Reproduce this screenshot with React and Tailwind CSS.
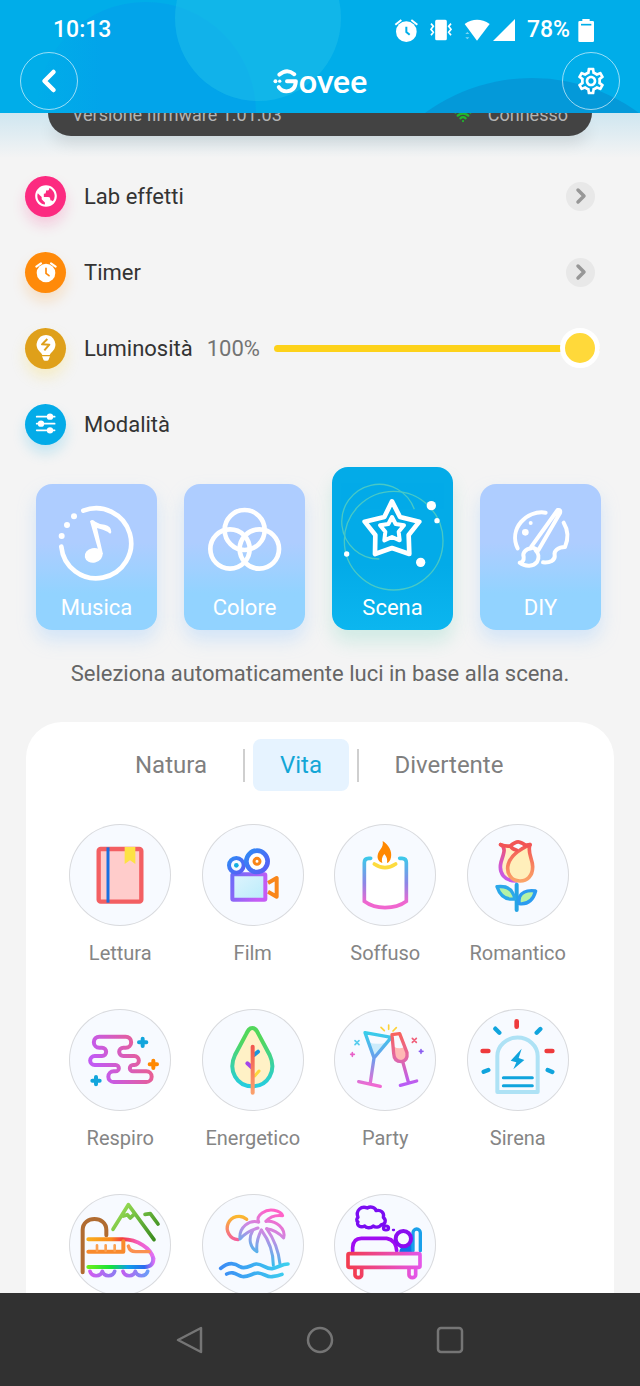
import { useState } from 'react'
import { ChevronLeft, ChevronRight, Wifi } from 'lucide-react'
import { MdOutlineSettings } from 'react-icons/md'
import { BiWorld } from 'react-icons/bi'

/* ---------- status bar ---------- */

const StatusIcons = () => (
  <div className="flex items-center">
    <svg viewBox="222 54 72 72" className="size-6 mr-3" fill="#fff">
      <circle cx="259" cy="95" r="31" />
      <path d="M226 74L244 60M292 74L274 60" stroke="#fff" strokeWidth="6" />
      <path d="M259 80V96L269 104" stroke="#00aee9" strokeWidth="6" fill="none" />
    </svg>
    <svg viewBox="332 60 66 66" className="size-[22px] mr-3" fill="none" stroke="#fff" strokeWidth="5">
      <rect x="350" y="65" width="30" height="56" rx="2" fill="#fff" />
      <path d="M335 74l7 8-7 9 7 9-7 9M395 74l-7 8 7 9-7 9 7 9" />
    </svg>
    <svg viewBox="430 58 78 66" className="w-[26px] h-[22px] mr-[3px]" fill="#fff">
      <path d="M432 73Q469 48 507 73L469 123Z" />
      <path d="M434 103l6-6 6 6zM434 113l6 6 6-6z" opacity=".5" />
    </svg>
    <svg viewBox="516 57 66 66" className="size-[22px] mr-3" fill="#fff">
      <path d="M582 57V123H516Z" />
    </svg>
    <span className="mr-2">78%</span>
    <svg viewBox="771 57 48 69" className="w-4 h-[23px]">
      <path d="M784 57h22v6h9q4 0 4 4v55q0 4-4 4h-39q-4 0-4-4V67q0-4 4-4h8z" fill="#fff" />
      <path d="M780 74h31" stroke="#00aee9" strokeWidth="5" />
    </svg>
  </div>
)

const Header = () => (
  <header className="relative z-10 shrink-0 overflow-hidden bg-[#00ade9] text-white">
    <svg
      viewBox="0 0 640 113"
      preserveAspectRatio="xMidYMax slice"
      className="absolute inset-0 size-full"
      aria-hidden="true"
    >
      <defs>
        <linearGradient id="headerBlob" x1="0" x2="1">
          <stop offset="0" stopColor="#00ade9" />
          <stop offset=".3" stopColor="#02a4ea" />
          <stop offset="1" stopColor="#02a4ea" />
        </linearGradient>
      </defs>
      <circle cx="146" cy="112" r="110" fill="url(#headerBlob)" />
      <circle cx="258" cy="18" r="83" fill="#1cbde9" fillOpacity=".6" />
      <circle cx="532" cy="259" r="181" fill="#0499d9" />
    </svg>

    <div className="relative flex h-[52px] items-center justify-between pt-2 pl-[53px] pr-[46px] text-[23px] font-medium">
      <span>10:13</span>
      <StatusIcons />
    </div>

    <div className="relative flex items-center justify-between px-5 pb-[3px]">
      <button
        aria-label="Indietro"
        className="flex size-[58px] items-center justify-center rounded-full border border-white/60"
      >
        <ChevronLeft className="size-9" strokeWidth={3} />
      </button>
      <div className="flex items-center">
        <svg viewBox="820 200 78 82" className="w-[26px] h-[27px]" fill="none" stroke="#fff" strokeWidth="12">
          <path d="M839 220Q862 200 884 219" strokeLinecap="round" />
          <path d="M862 240H889Q887 271 860 271Q845 270 837 258" strokeLinecap="round" strokeLinejoin="round" />
          <circle cx="827" cy="240" r="6" fill="#fff" stroke="none" />
          <circle cx="840" cy="240" r="5" fill="#fff" stroke="none" />
        </svg>
        <span className="text-[32px] leading-8 font-bold font-['Lato',sans-serif]">ovee</span>
      </div>
      <button
        aria-label="Impostazioni"
        className="flex size-[58px] items-center justify-center rounded-full border border-white/60"
      >
        <MdOutlineSettings className="size-8" />
      </button>
    </div>
  </header>
)

/* ---------- settings rows ---------- */

const TimerIcon = () => (
  <svg viewBox="104 300 66 66" className="size-[22px]" fill="#fff">
    <circle cx="137" cy="336" r="28" />
    <path d="M108 317L122 307M166 317L152 307" stroke="#fff" strokeWidth="6" strokeLinecap="round" />
    <path d="M137 322V337L146 344" stroke="#ff8a0a" strokeWidth="5" fill="none" strokeLinecap="round" />
  </svg>
)

const BulbIcon = () => (
  <svg viewBox="101 522 72 84" className="w-6 h-7" fill="#fff">
    <path d="M137 525a29 29 0 0 1 20 49q-7 6-9 11h-22q-2-5-9-11a29 29 0 0 1 20-49z" />
    <path d="M125 589h24l-5 12q-7 3-14 0z" />
    <path d="M141 537L125 553L147 554L132 571" stroke="#dfa01a" strokeWidth="6" fill="none" strokeLinejoin="round" />
  </svg>
)

const SlidersIcon = () => (
  <svg viewBox="104 762 66 66" className="size-[22px]" stroke="#fff" strokeWidth="5" fill="#fff" strokeLinecap="round">
    <path d="M109 773H163M109 794H163M109 814H163" />
    <circle cx="149" cy="773" r="7" />
    <circle cx="122" cy="794" r="7" />
    <circle cx="149" cy="814" r="7" />
  </svg>
)

const RowBadge = ({ className, children }) => (
  <span className={`flex size-[41px] shrink-0 items-center justify-center rounded-full text-white ${className}`}>
    {children}
  </span>
)

const LinkRow = ({ badge, label }) => (
  <a href="#" className="flex h-19 items-center gap-[18px]">
    {badge}
    <span className="flex-1 text-[22px]">{label}</span>
    <span className="mr-[5px] flex size-[29px] items-center justify-center rounded-full bg-[#e8e8e8]">
      <ChevronRight className="size-6 text-[#979797]" strokeWidth={3.5} />
    </span>
  </a>
)

/* ---------- mode cards ---------- */

const MusicArt = () => (
  <svg viewBox="50 87 363 330" className="w-full" fill="none" stroke="#fff" strokeWidth="14" strokeLinecap="round">
    <path d="M192 167A105 105 0 1 1 126 275" />
    <g fill="#fff" stroke="none">
      <circle cx="164" cy="184" r="9" />
      <circle cx="143" cy="210" r="9" />
      <circle cx="127" cy="243" r="9" />
      <ellipse cx="223" cy="301" rx="27" ry="22" transform="rotate(-12 223 301)" />
      <path d="M212 199Q219 191 228 200Q240 208 256 209Q276 213 276 231Q274 240 266 231Q252 224 233 219L251 298L241 300Z" />
    </g>
  </svg>
)

const ColorArt = () => (
  <svg viewBox="493 87 363 330" className="w-full" fill="none" stroke="#fff" strokeWidth="14">
    <circle cx="675" cy="225" r="60" />
    <circle cx="631" cy="282" r="59" />
    <circle cx="719" cy="282" r="59" />
  </svg>
)

const SceneArt = () => (
  <svg viewBox="38 36 363 381" className="w-full" fill="none" stroke="#fff" strokeLinejoin="round">
    <g stroke="#5ad0bd" strokeWidth="4" opacity=".8">
      <circle cx="223" cy="257" r="148" />
      <path d="M285 163A112 112 0 1 0 180 312" />
    </g>
    <path
      d="M218 139L242 186L300 200L268 240L270 297L218 279L167 297L168 240L136 200L195 186Z"
      strokeWidth="14"
    />
    <path
      d="M218 186L229 207L254 211L238 230L241 256L218 246L195 256L198 230L182 211L207 207Z"
      strokeWidth="12"
    />
    <g fill="#fff" stroke="none">
      <circle cx="336" cy="152" r="14" />
      <circle cx="353" cy="197" r="8" />
      <circle cx="82" cy="297" r="8" />
      <circle cx="304" cy="322" r="14" />
    </g>
  </svg>
)

const DiyArt = () => (
  <svg
    viewBox="481 87 363 330"
    className="w-full"
    fill="none"
    stroke="#fff"
    strokeWidth="12"
    strokeLinecap="round"
    strokeLinejoin="round"
  >
    <path d="M678 173C620 164 566 222 594 280" />
    <path d="M732 203C746 226 746 252 736 276C715 276 702 288 705 300C708 316 690 324 670 322" />
    <path d="M714 165Q724 163 721 174L656 286L635 275Z" />
    <path d="M635 280C616 282 608 295 612 306C613 317 607 322 600 323C618 337 642 334 652 321C660 308 656 294 648 286" />
    <g fill="#fff" stroke="none">
      <circle cx="617" cy="232" r="10" />
      <circle cx="633" cy="204" r="6" />
    </g>
  </svg>
)

const modes = [
  { id: 'musica', label: 'Musica', Art: MusicArt },
  { id: 'colore', label: 'Colore', Art: ColorArt },
  { id: 'scena', label: 'Scena', Art: SceneArt },
  { id: 'diy', label: 'DIY', Art: DiyArt },
]

/* ---------- scene icons ---------- */

const ReadingIcon = () => (
  <svg viewBox="44 40 306 306" className="size-full">
    <rect x="133" y="115" width="128" height="158" rx="6" fill="#ffcccb" stroke="#f35f62" strokeWidth="13" />
    <path d="M161 110V276" stroke="#1a6ee0" strokeWidth="9" />
    <path d="M211 109H243V160L227 149L211 160Z" fill="#fde244" />
  </svg>
)

const FilmIcon = () => (
  <svg viewBox="442 40 306 306" className="size-full" fill="none" strokeWidth="12" strokeLinejoin="round">
    <defs>
      <linearGradient id="filmBody" x1="0" y1="0" x2="1" y2=".4">
        <stop offset="0" stopColor="#6a6cf8" />
        <stop offset="1" stopColor="#c55cf5" />
      </linearGradient>
      <linearGradient id="filmReel" x1="0" y1="0" x2="1" y2="1">
        <stop offset="0" stopColor="#2f8af5" />
        <stop offset="1" stopColor="#5a5cf5" />
      </linearGradient>
      <linearGradient id="filmGlass" x1="0" y1="0" x2="1" y2="1">
        <stop offset="0" stopColor="#dff4fd" />
        <stop offset="1" stopColor="#b9ecfb" />
      </linearGradient>
    </defs>
    <path d="M640 217L666 202V258L640 243" stroke="#f9861a" />
    <rect x="533" y="191" width="99" height="76" rx="3" stroke="url(#filmBody)" fill="url(#filmGlass)" />
    <circle cx="545" cy="164" r="22" stroke="url(#filmReel)" />
    <circle cx="545" cy="164" r="7" fill="#14aee0" />
    <circle cx="607" cy="152" r="32" stroke="url(#filmReel)" strokeWidth="14" fill="#fff" />
    <circle cx="607" cy="152" r="9" stroke="#f9861a" strokeWidth="9" />
  </svg>
)

const CandleIcon = () => (
  <svg viewBox="44 40 306 306" className="size-full" fill="none" strokeWidth="11" strokeLinecap="round">
    <defs>
      <linearGradient id="candle" gradientUnits="userSpaceOnUse" x1="0" y1="143" x2="0" y2="292">
        <stop offset="0" stopColor="#3ec8ea" />
        <stop offset=".5" stopColor="#8d86e6" />
        <stop offset=".9" stopColor="#f066cf" />
      </linearGradient>
    </defs>
    <path
      d="M154 143H148Q135 143 135 156V272Q160 291 197 291Q236 291 261 272V156Q261 143 248 143H241"
      stroke="url(#candle)"
      fill="#fff"
    />
    <path d="M165 160Q197 182 229 160" stroke="#fddb3e" />
    <path
      d="M190 91C208 102 219 122 215 140C213 151 208 156 203 157C205 146 202 138 195 130C188 138 186 147 189 157C180 155 173 146 175 134C177 118 194 112 190 91Z"
      fill="#ff8800"
    />
  </svg>
)

const RoseIcon = () => (
  <svg viewBox="442 40 306 306" className="size-full" fill="none" strokeWidth="11" strokeLinecap="round" strokeLinejoin="round">
    <defs>
      <linearGradient id="roseLeft" gradientUnits="userSpaceOnUse" x1="0" y1="100" x2="0" y2="212">
        <stop offset="0" stopColor="#f25560" />
        <stop offset=".6" stopColor="#cf57d6" />
        <stop offset="1" stopColor="#c85ae8" />
      </linearGradient>
      <linearGradient id="roseRight" gradientUnits="userSpaceOnUse" x1="0" y1="100" x2="0" y2="212">
        <stop offset="0" stopColor="#f25555" />
        <stop offset="1" stopColor="#fba468" />
      </linearGradient>
    </defs>
    <path d="M543 102C562 112 550 132 544 155C536 188 555 211 590 211L600 130L575 108Z" fill="#fff0c4" />
    <path d="M543 102C562 112 550 132 544 155C536 188 555 211 590 211" stroke="url(#roseLeft)" />
    <path
      d="M600 211C572 210 559 184 566 160C574 132 600 116 631 102C622 126 639 144 639 168C639 196 622 212 600 211Z"
      stroke="url(#roseRight)"
      fill="#ffefbb"
    />
    <path
      d="M543 102Q558 108 572 106Q588 92 598 94Q612 98 616 104L631 102M572 106Q578 116 590 118"
      stroke="#f25555"
    />
    <path d="M591 222V298" stroke="#26a4e4" strokeWidth="12" />
    <path d="M532 228Q568 224 578 246Q586 258 585 265Q546 270 532 228Z" stroke="#2ba8ea" strokeWidth="10" fill="#b4f2a6" />
    <path d="M648 241Q612 236 600 258Q597 268 598 279Q636 284 648 241Z" stroke="#2b9bf0" strokeWidth="10" fill="#b4f2a6" />
  </svg>
)

const BreathIcon = () => (
  <svg viewBox="44 27 306 306" className="size-full" fill="none" strokeWidth="12" strokeLinecap="round">
    <defs>
      <linearGradient id="breath" x1="0" y1=".3" x2="1" y2="0">
        <stop offset="0" stopColor="#c25af2" />
        <stop offset="1" stopColor="#f2607a" />
      </linearGradient>
    </defs>
    <path
      d="M135 110H214A16 16 0 0 1 214 143H207A12 12 0 0 0 207 168H240A13 13 0 0 1 240 195H236A9 9 0 0 0 236 214H276A16 16 0 0 1 276 246H178A16 16 0 0 1 178 214H184A9 9 0 0 0 184 195H121A13 13 0 0 1 121 168H143A12 12 0 0 0 143 143H135A16 16 0 0 1 135 110Z"
      stroke="url(#breath)"
    />
    <path d="M265 116V138M254 127H276M125 231V253M114 242H136" stroke="#12a5dc" />
    <path d="M297 182V204M286 193H308" stroke="#ff8800" />
  </svg>
)

const LeafIcon = () => (
  <svg viewBox="442 27 306 306" className="size-full" fill="none" strokeWidth="12" strokeLinecap="round">
    <defs>
      <linearGradient id="leaf" x1="0" y1="0" x2="0" y2="1">
        <stop offset=".2" stopColor="#52d75c" />
        <stop offset="1" stopColor="#25cde0" />
      </linearGradient>
      <linearGradient id="leafStem" gradientUnits="userSpaceOnUse" x1="0" y1="140" x2="0" y2="278">
        <stop offset="0" stopColor="#f2584f" />
        <stop offset="1" stopColor="#fba06c" />
      </linearGradient>
    </defs>
    <path
      d="M593 84C602 84 606 91 612 103L645 165C667 212 640 259 593 259C546 259 519 212 541 165L574 103C580 91 584 84 593 84Z"
      stroke="url(#leaf)"
      fill="#fff1c6"
    />
    <path d="M598 165L610 155" stroke="#1b96dd" />
    <path d="M578 190L591 202" stroke="#a346ea" />
    <path d="M600 228L613 213" stroke="#fdd63c" strokeWidth="9" />
    <path d="M594 140V278" stroke="url(#leafStem)" />
  </svg>
)

const PartyIcon = () => (
  <svg viewBox="44 27 306 306" className="size-full" fill="none" strokeWidth="10" strokeLinecap="round" strokeLinejoin="round">
    <defs>
      <linearGradient id="martini" gradientUnits="userSpaceOnUse" x1="0" y1="98" x2="0" y2="255">
        <stop offset="0" stopColor="#38cdea" />
        <stop offset=".5" stopColor="#6d9cec" />
        <stop offset="1" stopColor="#f06ad2" />
      </linearGradient>
      <linearGradient id="flute" gradientUnits="userSpaceOnUse" x1="0" y1="100" x2="0" y2="255">
        <stop offset="0" stopColor="#f8635c" />
        <stop offset=".5" stopColor="#e067a8" />
        <stop offset="1" stopColor="#b85cf8" />
      </linearGradient>
    </defs>
    <path d="M148 126Q168 136 198 128L165 172Z" fill="#ccecfb" />
    <path d="M137 98L216 112L164 174ZM164 174L153 248M118 245L183 259" stroke="url(#martini)" />
    <path d="M224 140Q240 150 256 140L263 165Q262 183 244 184Q226 182 224 160Z" fill="#ffb9b4" />
    <path
      d="M218 104L241 101L263 158Q266 182 246 185Q224 185 223 160ZM251 188L267 246M243 256L292 243"
      stroke="url(#flute)"
    />
    <path d="M185 82L195 92M208 75V88M231 83L221 93" stroke="#fdd23a" strokeWidth="5" />
    <path d="M107 122L119 134M119 122L107 134" stroke="#57cdee" strokeWidth="5" />
    <path d="M99 158V169M94 163H105" stroke="#e860c8" strokeWidth="5" />
    <path d="M279 115L291 127M291 115L279 127" stroke="#f0607a" strokeWidth="5" />
    <path d="M305 149V160M300 154H311" stroke="#8a5cf0" strokeWidth="5" />
  </svg>
)

const SirenIcon = () => (
  <svg viewBox="442 27 306 306" className="size-full" fill="none" strokeLinecap="round">
    <path
      d="M533 276V168A60 55 0 0 1 654 168V276Z"
      stroke="#aee2f5"
      strokeWidth="12"
      strokeLinejoin="round"
    />
    <path d="M551 233H638M551 257H638" stroke="#10a4dd" strokeWidth="9" />
    <path d="M606 146L573 182L590 187L581 208L614 180L597 174Z" fill="#10a4dd" />
    <path d="M591 64V80M489 153H506M681 153H698" stroke="#ee3a3c" strokeWidth="14" />
    <path d="M527 86L539 98M662 87L651 98M492 215L506 210M684 210L698 216" stroke="#10a4dd" strokeWidth="13" />
  </svg>
)

const TrainIcon = () => (
  <svg viewBox="44 42 306 306" className="size-full" fill="none" strokeWidth="12" strokeLinecap="round" strokeLinejoin="round">
    <defs>
      <linearGradient id="hill" gradientUnits="userSpaceOnUse" x1="180" y1="74" x2="300" y2="180">
        <stop offset="0" stopColor="#a4e65a" />
        <stop offset=".5" stopColor="#6db93e" />
        <stop offset="1" stopColor="#3a8a1e" />
      </linearGradient>
      <linearGradient id="trainTop" gradientUnits="userSpaceOnUse" x1="100" y1="0" x2="300" y2="0">
        <stop offset="0" stopColor="#f9ad1c" />
        <stop offset=".35" stopColor="#fb8a1a" />
        <stop offset=".52" stopColor="#f23c3c" />
        <stop offset=".75" stopColor="#f55cc0" />
        <stop offset="1" stopColor="#e070f5" />
      </linearGradient>
      <linearGradient id="trainBottom" gradientUnits="userSpaceOnUse" x1="100" y1="0" x2="300" y2="0">
        <stop offset="0" stopColor="#6cf01c" />
        <stop offset=".35" stopColor="#14e03c" />
        <stop offset=".6" stopColor="#0ca0e8" />
        <stop offset=".85" stopColor="#2a6af0" />
        <stop offset="1" stopColor="#e070f5" />
      </linearGradient>
      <linearGradient id="wheels" x1="0" y1="0" x2="1" y2="0">
        <stop offset="0" stopColor="#cf5cf0" />
        <stop offset=".45" stopColor="#8c7cf2" />
        <stop offset=".55" stopColor="#c45cf0" />
        <stop offset="1" stopColor="#6a9cf8" />
      </linearGradient>
    </defs>
    <path d="M85 277V150C85 106 156 106 156 150V166" stroke="#b06b30" />
    <path d="M176 148L222 74L299 179M207 108L219 104L228 114L238 104M272 103L288 101L311 132" stroke="url(#hill)" strokeWidth="11" />
    <path d="M102 178H205C250 178 290 205 297 235" stroke="url(#trainTop)" />
    <path d="M102 261H272Q298 260 297 235" stroke="url(#trainBottom)" />
    <path d="M102 215H207V184" stroke="#f98a2c" />
    <path d="M128 196V212M154 196V212M181 196V212" stroke="#fba050" strokeWidth="8" />
    <path d="M222 198Q226 215 244 215H284" stroke="#fb9050" strokeWidth="10" />
    <path
      d="M107 274A19 17 0 0 0 144 274A19 17 0 0 0 181 274M206 274A19 17 0 0 0 243 274A19 17 0 0 0 280 274"
      stroke="url(#wheels)"
      strokeWidth="11"
    />
  </svg>
)

const BeachIcon = () => (
  <svg viewBox="442 42 306 306" className="size-full" fill="none" strokeWidth="9" strokeLinecap="round" strokeLinejoin="round">
    <defs>
      <linearGradient id="sun" x1="0" y1="0" x2="0" y2="1">
        <stop offset="0" stopColor="#fbb82e" />
        <stop offset="1" stopColor="#f5609a" />
      </linearGradient>
      <linearGradient id="palm" gradientUnits="userSpaceOnUse" x1="660" y1="100" x2="600" y2="240">
        <stop offset="0" stopColor="#ff62c8" />
        <stop offset=".45" stopColor="#c88ce4" />
        <stop offset="1" stopColor="#2cc0ee" />
      </linearGradient>
      <linearGradient id="wave" x1="0" y1="0" x2="1" y2="0">
        <stop offset="0" stopColor="#3c8cf5" />
        <stop offset="1" stopColor="#3cd0ee" />
      </linearGradient>
    </defs>
    <path d="M576 118A35 35 0 1 0 550 179" stroke="url(#sun)" strokeWidth="10" />
    <g stroke="url(#palm)">
      <path d="M612 126C602 106 634 86 658 91C674 94 682 100 684 107C662 104 646 110 634 124" />
      <path d="M634 124C664 120 694 146 687 174C672 158 656 148 636 146" />
      <path d="M612 126C584 118 552 142 556 177C572 158 588 150 610 144" />
      <path d="M594 152C580 176 586 204 607 215C604 192 610 170 620 150" />
      <path d="M620 150C642 180 656 216 656 256M636 146C660 180 672 214 676 252" />
    </g>
    <path
      d="M498 265C520 246 540 248 556 260C572 270 590 254 604 252C622 250 634 268 652 266C672 262 682 252 700 252M516 282C534 272 546 284 560 289C580 294 594 278 610 279C628 280 636 292 652 290Q670 288 682 283"
      stroke="url(#wave)"
      strokeWidth="11"
    />
  </svg>
)

const SleepIcon = () => (
  <svg viewBox="840 42 306 306" className="size-full" fill="none" strokeWidth="11" strokeLinecap="round" strokeLinejoin="round">
    <defs>
      <linearGradient id="bed" x1="0" y1="0" x2="1" y2="0">
        <stop offset="0" stopColor="#f23c50" />
        <stop offset="1" stopColor="#e456e8" />
      </linearGradient>
    </defs>
    <path
      d="M912 112C904 92 922 76 940 84C950 78 964 82 966 92C980 88 992 98 988 112C998 120 994 134 982 134C976 144 962 142 958 138C950 146 936 144 932 138C920 144 906 136 912 126C906 122 908 116 912 112Z"
      stroke="#7a0cf2"
      strokeWidth="10"
    />
    <ellipse cx="996" cy="144" rx="8" ry="6" stroke="#7a0cf2" strokeWidth="9" />
    <path d="M1017 150H1020" stroke="#7a0cf2" strokeWidth="7" />
    <path d="M1036 216C1036 198 1060 192 1074 182V216Z" fill="#0c74ea" />
    <path d="M1077 212V158A11 11 0 0 1 1099 158V212" stroke="#1aa0ea" strokeWidth="10" />
    <path d="M896 214V202Q898 175 922 175H998Q1026 180 1028 212" stroke="#a00cf2" />
    <circle cx="1048" cy="176" r="23" stroke="#8a0cf0" strokeWidth="12" fill="#f7faff" />
    <path d="M903 264V285A10 8 0 0 0 923 285V264M1065 264V285A10 8 0 0 0 1085 285V264" stroke="url(#bed)" />
    <rect x="882" y="221" width="216" height="41" rx="4" stroke="url(#bed)" />
  </svg>
)

const scenes = [
  { name: 'Lettura', Icon: ReadingIcon, label: true },
  { name: 'Film', Icon: FilmIcon, label: true },
  { name: 'Soffuso', Icon: CandleIcon, label: true },
  { name: 'Romantico', Icon: RoseIcon, label: true },
  { name: 'Respiro', Icon: BreathIcon, label: true },
  { name: 'Energetico', Icon: LeafIcon, label: true },
  { name: 'Party', Icon: PartyIcon, label: true },
  { name: 'Sirena', Icon: SirenIcon, label: true },
  { name: 'Treno', Icon: TrainIcon },
  { name: 'Spiaggia', Icon: BeachIcon },
  { name: 'Sonno', Icon: SleepIcon },
]

const tabStyles = (active) =>
  active ? 'bg-[#e6f3ff] text-[#13a6d6]' : 'text-[#7f7f7f]'

const App = () => {
  const [brightness, setBrightness] = useState(100)
  const [mode, setMode] = useState('scena')
  const [tab, setTab] = useState('Vita')

  return (
    <div className="flex h-screen flex-col overflow-hidden bg-[#f4f4f4] font-['Roboto',sans-serif] text-[#333]">
      <Header />

      <main className="flex-1 overflow-y-auto [scrollbar-width:none]">
        {/* device info, scrolled under the header */}
        <div className="h-[45px] bg-linear-to-b from-[#cfe6f0] to-[#f4f4f4] px-12">
          <div className="flex h-[23px] items-end justify-between rounded-b-[32px] bg-[#434343] px-6 pb-[11px] text-[18px] leading-5 text-[#b4b4b4] shadow-[0_10px_16px_-4px_rgba(0,0,0,0.12)]">
            <span>Versione firmware 1.01.03</span>
            <span className="flex items-center gap-4">
              <Wifi className="size-[18px] text-[#22b52e]" strokeWidth={3} />
              Connesso
            </span>
          </div>
        </div>

        <section className="pl-[25px] pr-10">
          <LinkRow
            label="Lab effetti"
            badge={
              <RowBadge className="bg-[#fc2a80] shadow-[0_8px_14px_rgba(252,42,128,0.2)]">
                <BiWorld className="size-[26px]" />
              </RowBadge>
            }
          />
          <LinkRow
            label="Timer"
            badge={
              <RowBadge className="bg-[#ff8a0a] shadow-[0_8px_14px_rgba(255,138,10,0.2)]">
                <TimerIcon />
              </RowBadge>
            }
          />
          <div className="flex h-19 items-center">
            <RowBadge className="bg-[#dfa01a] shadow-[0_8px_14px_rgba(253,215,60,0.25)]">
              <BulbIcon />
            </RowBadge>
            <label htmlFor="brightness" className="ml-[18px] text-[22px]">
              Luminosità
            </label>
            <span className="ml-[14px] text-[22px] text-[#737373]">{brightness}%</span>
            <input
              id="brightness"
              type="range"
              min="1"
              max="100"
              value={brightness}
              onChange={(e) => setBrightness(Number(e.target.value))}
              className="ml-[14px] h-[7px] min-w-0 flex-1 appearance-none rounded-full bg-[#fdd21a] [&::-webkit-slider-thumb]:size-10 [&::-webkit-slider-thumb]:appearance-none [&::-webkit-slider-thumb]:rounded-full [&::-webkit-slider-thumb]:border-5 [&::-webkit-slider-thumb]:border-white [&::-webkit-slider-thumb]:bg-[#ffd93a]"
            />
          </div>
          <div className="flex h-19 items-center gap-[18px]">
            <RowBadge className="bg-[#03abe8] shadow-[0_8px_14px_rgba(3,171,232,0.2)]">
              <SlidersIcon />
            </RowBadge>
            <h2 className="text-[22px]">Modalità</h2>
          </div>
        </section>

        <div className="mt-[5px] grid grid-cols-4 items-end gap-[27px] pl-9 pr-[39px]">
          {modes.map(({ id, label, Art }) => (
            <button
              key={id}
              onClick={() => setMode(id)}
              className={`flex flex-col items-center overflow-hidden rounded-2xl pb-2 text-[22px] leading-7 text-white ${
                mode === id
                  ? 'bg-linear-to-b from-[#03abe8] from-60% to-[#0cb6ef] shadow-[0_12px_18px_rgba(70,200,170,0.2)]'
                  : 'bg-linear-to-b from-[#aecdff] from-40% to-[#92d3ff] to-75% shadow-[0_10px_18px_rgba(150,200,255,0.35)]'
              }`}
            >
              <Art />
              {label}
            </button>
          ))}
        </div>

        <p className="mt-[30px] text-center text-[22px] leading-7 text-[#666]">
          Seleziona automaticamente luci in base alla scena.
        </p>

        <section className="mx-[26px] mt-[34px] rounded-t-[36px] bg-white pt-[17px] pr-[30px] pl-7">
          <div className="flex items-center justify-center gap-2 text-2xl">
            <button onClick={() => setTab('Natura')} className={`h-13 w-32 rounded-lg ${tabStyles(tab === 'Natura')}`}>
              Natura
            </button>
            <span className="h-[33px] w-0.5 bg-[#cfcfcf]" />
            <button onClick={() => setTab('Vita')} className={`h-13 w-24 rounded-lg ${tabStyles(tab === 'Vita')}`}>
              Vita
            </button>
            <span className="h-[33px] w-0.5 bg-[#cfcfcf]" />
            <button onClick={() => setTab('Divertente')} className={`h-13 w-41 rounded-lg ${tabStyles(tab === 'Divertente')}`}>
              Divertente
            </button>
          </div>

          <div className="mt-[33px] grid grid-cols-4 gap-y-11">
            {scenes.map(({ name, Icon, label }) => (
              <button key={name} aria-label={name} className="flex flex-col items-center gap-[15px]">
                <span className="size-[102px] rounded-full bg-[#f7faff] ring-1 ring-[#d9dadd] ring-inset">
                  <Icon />
                </span>
                {label && <span className="text-xl leading-6 text-[#858585]">{name}</span>}
              </button>
            ))}
          </div>
        </section>
      </main>

      <nav className="z-10 flex h-[93px] shrink-0 items-center justify-center gap-[102px] bg-[#313131]">
        <button aria-label="Indietro">
          <svg viewBox="0 0 28 28" className="size-7" fill="none" stroke="#757575" strokeWidth="2.5" strokeLinejoin="round">
            <path d="M2 14L25 2V26Z" />
          </svg>
        </button>
        <button aria-label="Home">
          <svg viewBox="0 0 28 28" className="size-7" fill="none" stroke="#757575" strokeWidth="2.5">
            <circle cx="14" cy="14" r="12" />
          </svg>
        </button>
        <button aria-label="Recenti">
          <svg viewBox="0 0 28 28" className="size-7" fill="none" stroke="#757575" strokeWidth="2.5">
            <rect x="2" y="2" width="24" height="24" rx="3" />
          </svg>
        </button>
      </nav>
    </div>
  )
}

export default App
